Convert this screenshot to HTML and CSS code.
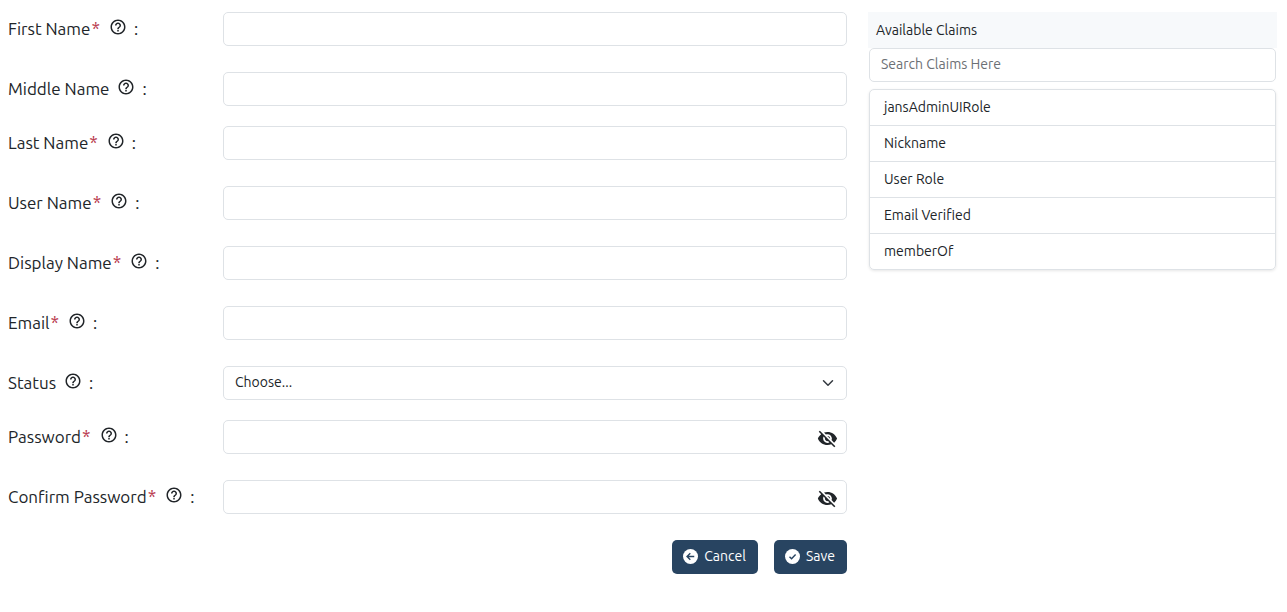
FILE: index.html
```
<!DOCTYPE html>
<html lang="en">
<head>
<meta charset="utf-8">
<meta name="viewport" content="width=device-width, initial-scale=1">
<title>Add User</title>
<link rel="stylesheet" href="styles.css">
</head>
<body>
<svg class="sprite" aria-hidden="true">
  <symbol id="help" viewBox="0 0 24 24"><path d="M11 18h2v-2h-2v2zm1-16C6.48 2 2 6.48 2 12s4.48 10 10 10 10-4.480 10-10S17.520 2 12 2zm0 18c-4.410 0-8-3.590-8-8s3.590-8 8-8 8 3.590 8 8-3.590 8-8 8zm0-14c-2.210 0-4 1.790-4 4h2c0-1.100.9-2 2-2s2 .9 2 2c0 2-3 1.750-3 5h2c0-2.250 3-2.500 3-5 0-2.210-1.790-4-4-4z"/></symbol>
  <symbol id="eye-off" viewBox="0 0 24 24"><path d="M12 7c2.760 0 5 2.240 5 5 0 .65-.13 1.260-.36 1.830l2.920 2.920c1.510-1.260 2.700-2.890 3.430-4.750-1.730-4.390-6-7.500-11-7.500-1.400 0-2.740.25-3.980.7l2.160 2.160C10.740 7.130 11.350 7 12 7zM2 4.270l2.280 2.280.46.46C3.080 8.300 1.780 10.020 1 12c1.730 4.390 6 7.500 11 7.500 1.550 0 3.030-.3 4.380-.84l.42.42L19.730 22 21 20.730 3.270 3 2 4.270zM7.530 9.800l1.550 1.550c-.05.21-.08.43-.08.65 0 1.660 1.340 3 3 3 .22 0 .44-.03.65-.08l1.550 1.550c-.67.33-1.410.53-2.200.53-2.760 0-5-2.240-5-5 0-.79.2-1.530.53-2.200zm4.310-.78l3.150 3.150.02-.16c0-1.660-1.340-3-3-3l-.17.010z"/></symbol>
</svg>
<main class="page">
  <form class="user-form">
    <div class="field">
      <label class="field-label" for="first">First Name<span class="required">*</span><svg class="help"><use href="#help"/></svg>:</label>
      <input class="control" id="first" type="text">
    </div>
    <div class="field field-optional">
      <label class="field-label" for="middle">Middle Name<svg class="help"><use href="#help"/></svg>:</label>
      <input class="control" id="middle" type="text">
    </div>
    <div class="field">
      <label class="field-label" for="last">Last Name<span class="required">*</span><svg class="help"><use href="#help"/></svg>:</label>
      <input class="control" id="last" type="text">
    </div>
    <div class="field">
      <label class="field-label" for="user">User Name<span class="required">*</span><svg class="help"><use href="#help"/></svg>:</label>
      <input class="control" id="user" type="text">
    </div>
    <div class="field">
      <label class="field-label" for="display">Display Name<span class="required">*</span><svg class="help"><use href="#help"/></svg>:</label>
      <input class="control" id="display" type="text">
    </div>
    <div class="field">
      <label class="field-label" for="email">Email<span class="required">*</span><svg class="help"><use href="#help"/></svg>:</label>
      <input class="control" id="email" type="email">
    </div>
    <div class="field field-optional">
      <label class="field-label" for="status">Status<svg class="help"><use href="#help"/></svg>:</label>
      <div class="control-wrap">
        <select class="control" id="status"><option>Choose...</option><option>Active</option><option>Inactive</option></select>
        <svg class="chevron" viewBox="0 0 16 16" aria-hidden="true"><path d="m2 5 6 6 6-6"/></svg>
      </div>
    </div>
    <div class="field">
      <label class="field-label" for="password">Password<span class="required">*</span><svg class="help"><use href="#help"/></svg>:</label>
      <div class="control-wrap">
        <input class="control" id="password" type="password">
        <button class="reveal" type="button" aria-label="Show password"><svg class="eye"><use href="#eye-off"/></svg></button>
      </div>
    </div>
    <div class="field">
      <label class="field-label" for="confirm">Confirm Password<span class="required">*</span><svg class="help"><use href="#help"/></svg>:</label>
      <div class="control-wrap">
        <input class="control" id="confirm" type="password">
        <button class="reveal" type="button" aria-label="Show confirmed password"><svg class="eye"><use href="#eye-off"/></svg></button>
      </div>
    </div>
    <div class="actions">
      <button class="btn" type="button"><svg class="btn-icon" viewBox="0 0 16 16" aria-hidden="true"><circle cx="8" cy="8" r="8"/><path d="M12 8H4.500M7.800 4.500 4.300 8l3.500 3.500"/></svg>Cancel</button>
      <button class="btn" type="submit"><svg class="btn-icon" viewBox="0 0 16 16" aria-hidden="true"><circle cx="8" cy="8" r="8"/><path d="m4.800 8.200 2.200 2.200 4.300-4.500"/></svg>Save</button>
    </div>
  </form>
  <aside class="claims">
    <h2 class="claims-title">Available Claims</h2>
    <div class="claims-body">
      <input class="control" type="search" placeholder="Search Claims Here" aria-label="Search claims">
      <ul class="claims-list">
        <li><button class="claim" type="button">jansAdminUIRole</button></li>
        <li><button class="claim" type="button">Nickname</button></li>
        <li><button class="claim" type="button">User Role</button></li>
        <li><button class="claim" type="button">Email Verified</button></li>
        <li><button class="claim" type="button">memberOf</button></li>
      </ul>
    </div>
  </aside>
</main>
</body>
</html>
```
FILE: styles.css
```
* { box-sizing: border-box; }

body {
  margin: 0;
  background: #fff;
  color: #212529;
  font: 400 14px/20px Ubuntu, "Noto Sans", sans-serif;
}

button, input, select { font: inherit; color: inherit; }

.sprite { display: none; }

.page {
  display: grid;
  grid-template-columns: minmax(0, 839fr) minmax(0, 409fr);
  gap: 21px;
  align-items: start;
  padding: 12px 10px 12px 8px;
}

.field {
  display: grid;
  grid-template-columns: minmax(0, 215fr) minmax(0, 624fr);
  align-items: center;
  margin-bottom: 26px;
}

.field-optional { margin-bottom: 20px; }

.field-label {
  font-size: 17px;
  line-height: 24px;
  white-space: nowrap;
}

.required {
  margin: 0 1px;
  color: #b8364b;
  font-size: 18px;
  line-height: 20px;
}

.help {
  width: 18px;
  height: 18px;
  margin: 0 7px 0 8px;
  vertical-align: -1px;
  fill: #212529;
}

.control {
  display: block;
  width: 100%;
  height: 34px;
  padding: 4px 11px 6px;
  border: 1px solid #dee2e6;
  border-radius: 5px;
  background: #fff;
  appearance: none;
}

.control::placeholder { color: #6c7075; opacity: 1; }

.control-wrap { position: relative; }

.chevron {
  position: absolute;
  top: 11px;
  right: 13px;
  width: 12px;
  height: 12px;
  fill: none;
  stroke: #343a40;
  stroke-width: 2;
  stroke-linecap: round;
  stroke-linejoin: round;
  pointer-events: none;
}

.reveal {
  position: absolute;
  top: 8px;
  right: 9px;
  padding: 0;
  border: 0;
  background: none;
}

.eye {
  display: block;
  width: 21px;
  height: 21px;
  fill: #212529;
}

.actions {
  display: flex;
  justify-content: flex-end;
  gap: 16px;
}

.btn {
  display: flex;
  align-items: center;
  gap: 6px;
  height: 34px;
  padding: 0 12px 2px 11px;
  border: 0;
  border-radius: 5px;
  background: #284461;
  color: #fff;
}

.btn-icon { width: 15px; height: 15px; fill: #fff; }

.btn-icon path {
  fill: none;
  stroke: #284461;
  stroke-width: 1.5;
}

.claims-title {
  margin: 0;
  padding: 8px;
  background: #f7f9fb;
  font-size: 14px;
  font-weight: inherit;
}

.claims-body {
  padding: 0 1px;
}

.claims-list {
  margin: 7px 0 0;
  padding: 0;
  border: 1px solid #dee2e6;
  border-radius: 5px;
  box-shadow: 0 1px 3px rgba(0, 0, 0, .1);
  list-style: none;
}

.claims-list li + li { border-top: 1px solid #dee2e6; }

.claim {
  display: block;
  width: 100%;
  height: 35px;
  padding: 0 14px 2px;
  border: 0;
  background: none;
  text-align: left;
}
```
